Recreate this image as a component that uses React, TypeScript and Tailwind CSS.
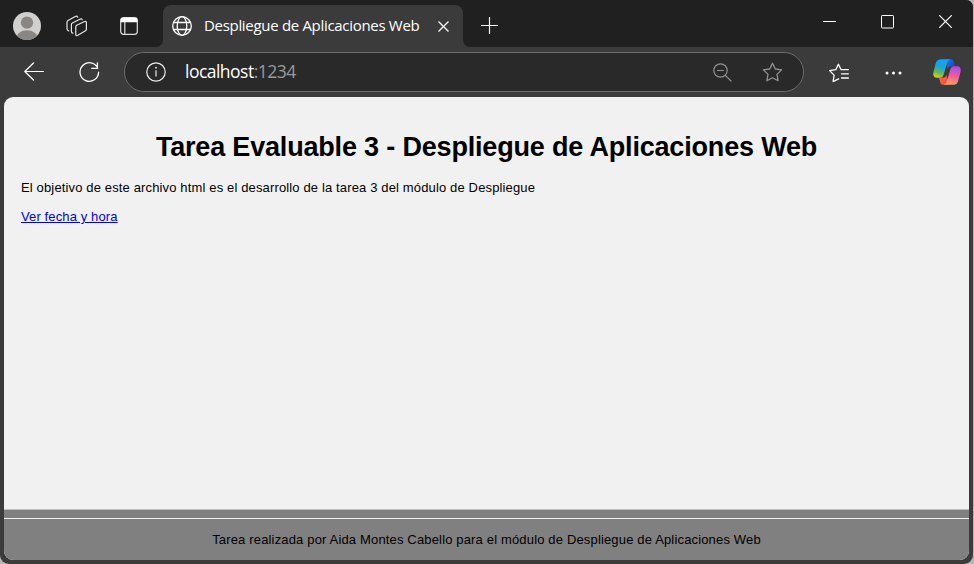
import React from "react";

type IconProps = { className?: string };

const Avatar = ({ className }: IconProps) => (
  <svg className={className} width="28" height="28" viewBox="0 0 28 28">
    <defs>
      <clipPath id="avatar-clip">
        <circle cx="14" cy="14" r="14" />
      </clipPath>
    </defs>
    <g clipPath="url(#avatar-clip)">
      <rect width="28" height="28" fill="#d2d0ce" />
      <circle cx="14" cy="10.6" r="6.2" fill="#8a8683" />
      <ellipse cx="14" cy="26.5" rx="11" ry="8.2" fill="#8a8683" />
    </g>
  </svg>
);

const Workspaces = ({ className }: IconProps) => (
  <svg className={className} width="22" height="22" viewBox="0 0 22 22" fill="none" stroke="#e4e4e4" strokeWidth="1.2" strokeLinejoin="round" strokeLinecap="round">
    <path d="M9.800 11.800Q9.800 10.700 10.700 10.200L18.600 6.500Q20.400 5.900 20.400 7.700V14.200Q20.400 15.200 19.500 15.700L11.800 20.300Q9.800 21.300 9.800 19.300Z" />
    <path d="M7 18.200Q5.400 18.200 5.400 16.500V9.600Q5.400 8.500 6.400 8L13.900 4.200Q15.600 3.400 16.200 4.800" />
    <path d="M2.700 15.800Q1 15.500 1 13.800V7.200Q1 6.100 2 5.500L9.200 1.500Q11 .7 11.700 2.200" />
  </svg>
);

const TabActions = ({ className }: IconProps) => (
  <svg className={className} width="18" height="18" viewBox="0 0 18 18" fill="none">
    <rect x="0.7" y="0.7" width="16.6" height="16.6" rx="2.8" stroke="#ddd" strokeWidth="1.2" />
    <path d="M.7 5.2V3.5A2.8 2.8 0 0 1 3.5.7h11a2.8 2.8 0 0 1 2.8 2.8v1.7z" fill="#fff" />
    <path d="M4.800 5v12.300" stroke="#ddd" strokeWidth="1.2" />
  </svg>
);

const Globe = ({ className }: IconProps) => (
  <svg className={className} width="20" height="20" viewBox="0 0 20 20" fill="none" stroke="#fff" strokeWidth="1.3">
    <circle cx="10" cy="10" r="9.3" />
    <ellipse cx="10" cy="10" rx="4.8" ry="9.3" />
    <path d="M1.500 6.500h17M1.500 13.500h17" />
  </svg>
);

const Copilot = ({ className }: IconProps) => (
  <svg className={className} width="28" height="26" viewBox="0 0 28 26">
    <defs>
      <linearGradient id="co-a" x1=".3" y1="0" x2="0" y2="1">
        <stop offset="0" stopColor="#1ba0f2" />
        <stop offset=".35" stopColor="#18a4df" />
        <stop offset=".65" stopColor="#62b956" />
        <stop offset="1" stopColor="#f6d512" />
      </linearGradient>
      <linearGradient id="co-b" x1=".6" y1="0" x2=".4" y2="1">
        <stop offset="0" stopColor="#a94af0" />
        <stop offset=".5" stopColor="#ee5aa1" />
        <stop offset="1" stopColor="#ffa35c" />
      </linearGradient>
      <linearGradient id="co-c" x1="0" y1="0" x2="1" y2="1">
        <stop offset="0" stopColor="#1878e8" />
        <stop offset="1" stopColor="#1840c8" />
      </linearGradient>
      <linearGradient id="co-d" x1="0" y1="0" x2="1" y2="1">
        <stop offset="0" stopColor="#f3703a" />
        <stop offset="1" stopColor="#f34a4a" />
      </linearGradient>
    </defs>
    <path d="M13 .2h4.800c1.800 0 2.600 1 3 2.600l1.200 4.500h-3.500c-2.300 0-3.400 1.200-4 3z" fill="url(#co-c)" />
    <path d="M15 25.800h-4.800c-1.800 0-2.600-1-3-2.600L6 18.700h3.500c2.300 0 3.400-1.200 4-3z" fill="url(#co-d)" />
    <path d="M8.300.2h9c-1.900.3-2.500 1.700-3.100 3.700l-3.500 11.600c-.6 2-1.600 3.300-3.600 3.300H3.900C.9 18.800-.2 16.600.4 13.600L2.800 4.100C3.600 1.400 5.300.2 8.300.2z" fill="url(#co-a)" />
    <path d="M19.700 25.800h-9c1.900-.3 2.500-1.700 3.100-3.700l3.500-11.600c.6-2 1.600-3.300 3.600-3.300h3.200c3 0 4.100 2.200 3.500 5.200l-2.400 9.500c-.8 2.700-2.500 3.900-5.500 3.900z" fill="url(#co-b)" />
  </svg>
);

const starPath = "M10.500 1.200l2.800 5.800 6.300.9-4.600 4.500 1.100 6.300-5.600-3-5.600 3 1.100-6.300L1.400 7.900l6.300-.9z";

function TitleBar() {
  return (
    <div className="flex h-[47px] items-start bg-[#202020]">
      <Avatar className="ml-[13px] mt-3 shrink-0" />
      <Workspaces className="ml-[25px] mt-[15px] shrink-0" />
      <TabActions className="ml-8 mt-[17px] shrink-0" />
      <div className="ml-[18px] h-[47px] w-[7px] shrink-0 bg-[#3b3b3b]">
        <div className="h-full rounded-br-[7px] bg-[#202020]" />
      </div>
      <div className="mt-[5px] flex h-[42px] w-[300px] shrink-0 items-center rounded-t-lg bg-[#3b3b3b]">
        <Globe className="ml-[9px] shrink-0" />
        <span className="mb-px ml-3 w-[218px] whitespace-nowrap font-['Open_Sans',sans-serif] text-[15px] tracking-[-0.31px] text-white">
          Despliegue de Aplicaciones Web
        </span>
        <svg className="ml-4 mt-px shrink-0" width="11" height="11" viewBox="0 0 11 11" stroke="#fff" strokeWidth="1.3">
          <path d="M.5.5l10 10M10.500.5l-10 10" />
        </svg>
      </div>
      <div className="h-[47px] w-[7px] shrink-0 bg-[#3b3b3b]">
        <div className="h-full rounded-bl-[7px] bg-[#202020]" />
      </div>
      <svg className="ml-[11px] mt-[17px] shrink-0" width="17" height="17" viewBox="0 0 17 17" stroke="#fff" strokeWidth="1.2">
        <path d="M8.500 0v17M0 8.500h17" />
      </svg>
      <div className="ml-auto mr-[21px] mt-[15px] flex items-start">
        <svg width="13" height="13" viewBox="0 0 13 13">
          <path d="M0 6.500h13" stroke="#fff" />
        </svg>
        <svg className="ml-[45px]" width="13" height="14" viewBox="0 0 13 14">
          <rect x=".5" y=".5" width="12" height="12.500" rx=".7" fill="none" stroke="#fff" />
        </svg>
        <svg className="ml-[45px]" width="13" height="13" viewBox="0 0 13 13" stroke="#fff" strokeWidth="1.200">
          <path d="M.3.300l12.400 12.400M12.700.300L.3 12.700" />
        </svg>
      </div>
    </div>
  );
}

function Toolbar() {
  return (
    <div className="flex h-[50px] items-center bg-[#3b3b3b]">
      <svg className="ml-6 shrink-0" width="20" height="20" viewBox="0 0 20 20" fill="none" stroke="#fff" strokeWidth="1.200" strokeLinecap="round" strokeLinejoin="round">
        <path d="M19.400 9.500H.8M9.500 1L.8 9.500l8.700 8.500" />
      </svg>
      <svg className="ml-[35px] shrink-0" width="21" height="21" viewBox="0 0 21 21" fill="none" stroke="#fff" strokeWidth="1.300" strokeLinecap="round" strokeLinejoin="round">
        <path d="M18.800 6.200A9.300 9.300 0 1 0 19.600 10.200M18.400 .8v5.600h-5.600" />
      </svg>
      <div className="ml-6 flex h-10 w-[680px] shrink-0 items-center rounded-full border border-[#6c6c6c] bg-[#292929]">
        <svg className="ml-[21px] shrink-0" width="20" height="20" viewBox="0 0 20 20" fill="none" stroke="#eee" strokeWidth="1.200">
          <circle cx="10" cy="10" r="9.200" />
          <path d="M10 8.300v6.200" />
          <circle cx="10" cy="5.700" r=".9" fill="#eee" stroke="none" />
        </svg>
        <span className="mb-px ml-[19px] whitespace-nowrap font-['Open_Sans',sans-serif] text-[17.500px] tracking-[-0.520px] text-white">
          localhost<span className="text-[#9a9a9a]">:1234</span>
        </span>
        <svg className="ml-auto shrink-0" width="19" height="19" viewBox="0 0 19 19" fill="none" stroke="#929292" strokeWidth="1.200" strokeLinecap="round">
          <circle cx="7.500" cy="7.500" r="6.700" />
          <path d="M12.300 12.300l5.700 5.700M4.500 7.500h6" />
        </svg>
        <svg className="ml-[30px] mr-5 shrink-0" width="21" height="20" viewBox="0 0 21 20" fill="none" stroke="#929292" strokeWidth="1.300" strokeLinejoin="round">
          <path d={starPath} />
        </svg>
      </div>
      <svg className="ml-6 mt-px shrink-0" width="22" height="20" viewBox="0 0 22 20" fill="none" stroke="#fff" strokeWidth="1.300" strokeLinejoin="round" strokeLinecap="round">
        <path d="M14.600 6.700L13 6.500l-2.600-5.200-2.600 5.400L1.600 7.600l4.500 4.500L5.100 18.600l5.600-2.700M13.500 6.600h6.900M13.500 10.800h6.900M13.500 15h6.900" />
      </svg>
      <svg className="ml-[35px] mt-px shrink-0" width="17" height="4" viewBox="0 0 17 4" fill="#fff">
        <circle cx="2" cy="2" r="1.500" />
        <circle cx="8.500" cy="2" r="1.500" />
        <circle cx="15" cy="2" r="1.500" />
      </svg>
      <Copilot className="ml-[31px] shrink-0" />
    </div>
  );
}

export default function App() {
  return (
    <div className="flex h-[564px] w-[974px] overflow-hidden bg-[#b5b5b5]">
      <div className="flex w-[973px] shrink-0 flex-col overflow-hidden rounded-b-[9px] rounded-tr-[7px] bg-[#3b3b3b]">
        <TitleBar />
        <Toolbar />
        <main className="ml-1 flex h-[463px] w-[965px] flex-col overflow-hidden rounded-[9px] bg-[#f1f1f1] font-['Liberation_Sans',Arial,sans-serif] text-[13px] leading-4 text-black">
          <div className="h-[412px] px-[17px]">
            <h1 className="mt-[34px] whitespace-nowrap text-center text-[27px] font-bold leading-8 tracking-[-0.18px]">
              Tarea Evaluable 3 - Despliegue de Aplicaciones Web
            </h1>
            <p className="mt-[17px] whitespace-nowrap tracking-[0.143px]">
              El objetivo de este archivo html es el desarrollo de la tarea 3 del módulo de Despliegue
            </p>
            <p className="mt-[13px] tracking-[0.120px]">
              <a href="#fecha" className="text-[#0000ee] underline">Ver fecha y hora</a>
            </p>
          </div>
          <footer className="flex grow flex-col border-t border-[#c0c0c0] bg-[#808080]">
            <div className="mt-[8px] h-px bg-[#f1f1f1]" />
            <p className="mt-[13px] whitespace-nowrap text-center tracking-[0.160px]">
              Tarea realizada por Aida Montes Cabello para el módulo de Despliegue de Aplicaciones Web
            </p>
          </footer>
        </main>
      </div>
    </div>
  );
}
